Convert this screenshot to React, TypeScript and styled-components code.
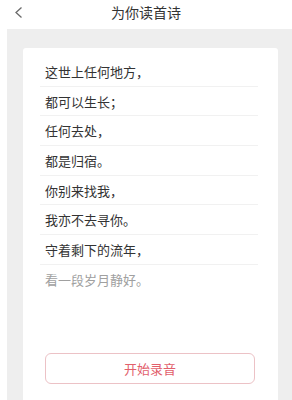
import styled, { createGlobalStyle } from 'styled-components';

const lines = [
  '这世上任何地方，',
  '都可以生长；',
  '任何去处，',
  '都是归宿。',
  '你别来找我，',
  '我亦不去寻你。',
  '守着剩下的流年，',
  '看一段岁月静好。',
];

const GlobalStyle = createGlobalStyle`
  html, body {
    margin: 0;
    padding: 0;
    background: #ffffff;
    font-family: 'Noto Sans CJK SC', 'Noto Sans', sans-serif;
  }
`;

const App = () => {
  return (
    <>
      <GlobalStyle />
      <Page>
        <Header>
          <BackButton aria-label="返回">
            <svg width="9" height="13" viewBox="0 0 9 13" fill="none">
              <path d="M7.5 1.5 L2 6.5 L7.5 11.5" stroke="#6a6a6a" strokeWidth="1.3" />
            </svg>
          </BackButton>
          <Title>为你读首诗</Title>
        </Header>

        <GreyArea>
          <Card>
            <PoemList>
              {lines.map((line, i) => (
                <PoemRow key={line} $last={i === lines.length - 1}>
                  {line}
                </PoemRow>
              ))}
            </PoemList>

            <RecordButton>开始录音</RecordButton>
          </Card>
        </GreyArea>
      </Page>
    </>
  );
};

export default App;

const Page = styled.div`
  width: 292px;
  height: 400px;
  overflow: hidden;
  display: flex;
  flex-direction: column;
  background: #ffffff;
`;

const Header = styled.header`
  position: relative;
  height: 29px;
  flex-shrink: 0;
  display: flex;
  align-items: center;
  justify-content: center;
  background: #ffffff;
`;

const BackButton = styled.button`
  position: absolute;
  left: 14px;
  top: 6px;
  padding: 0;
  border: none;
  background: transparent;
  display: flex;
`;

const Title = styled.h1`
  margin: 0;
  font-size: 14px;
  font-weight: 400;
  color: #333333;
  line-height: 20px;
  margin-top: -5px;
`;

const GreyArea = styled.main`
  flex: 1;
  margin-left: 7px;
  background: #eeeeee;
  padding: 19px 14px 0 16px;
  display: flex;
`;

const Card = styled.section`
  flex: 1;
  background: #ffffff;
  border-radius: 3px 3px 0 0;
  padding: 9px 20px 0 17px;
  display: flex;
  flex-direction: column;
`;

const PoemList = styled.ul`
  list-style: none;
  margin: 0;
  padding: 0;
`;

const PoemRow = styled.li<{ $last?: boolean }>`
  height: 29.7px;
  box-sizing: border-box;
  display: flex;
  align-items: center;
  padding-left: 5px;
  font-size: 13px;
  color: ${(p) => (p.$last ? '#a0a0a0' : '#333333')};
  border-bottom: 1px solid ${(p) => (p.$last ? 'transparent' : '#f1f1f1')};
`;

const RecordButton = styled.button`
  margin: 58px 0 0 5px;
  width: 210px;
  height: 31px;
  border: 1px solid #ecc2c6;
  border-radius: 6px;
  background: #ffffff;
  color: #e2606c;
  font-family: 'Noto Sans CJK SC', 'Noto Sans', sans-serif;
  font-size: 13px;
`;
